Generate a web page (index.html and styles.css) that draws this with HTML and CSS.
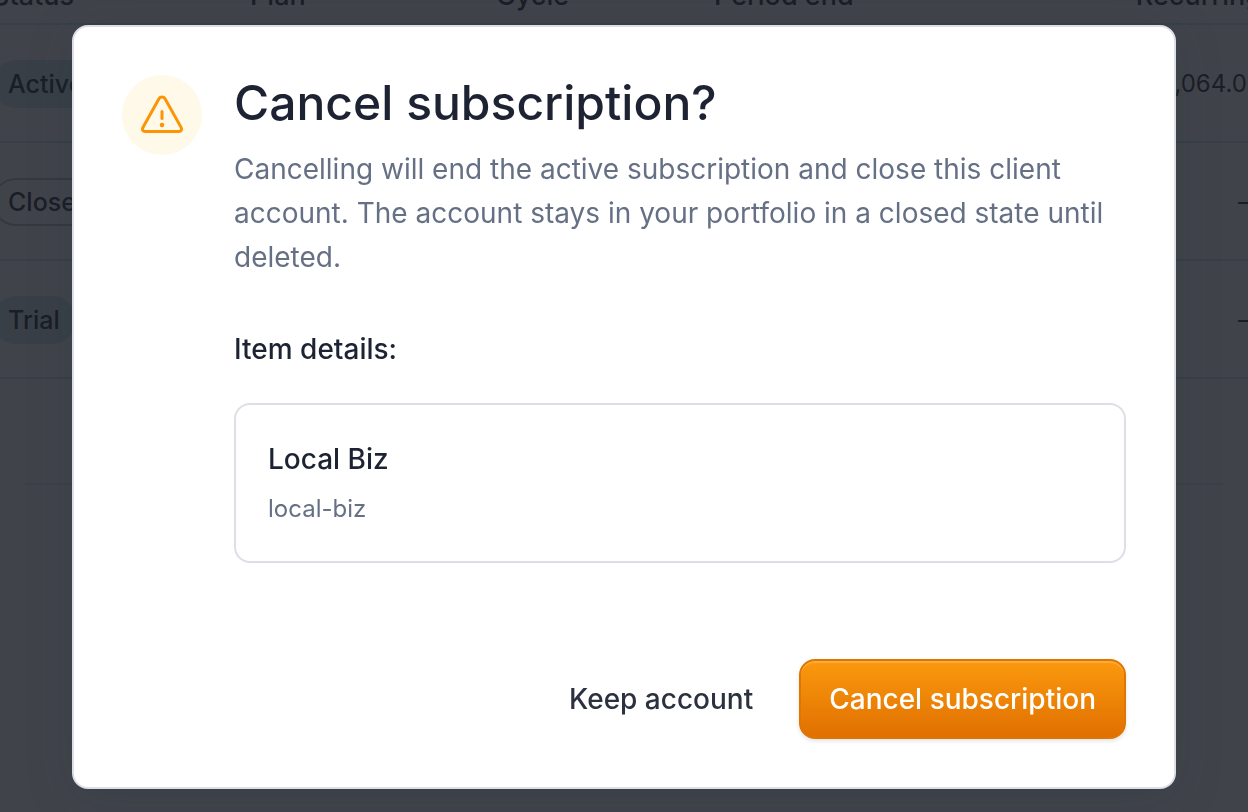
FILE: index.html
```html
<!DOCTYPE html>
<html lang="en">
<head>
    <meta charset="UTF-8">
    <title>Cancel subscription</title>
    <link rel="stylesheet" href="styles.css">
</head>
<body>

<div class="accounts">
    <table class="accounts-table">
        <colgroup>
            <col class="col-status">
            <col class="col-plan">
            <col class="col-cycle">
            <col class="col-period">
            <col>
        </colgroup>
        <thead>
        <tr>
            <th>Status</th>
            <th>Plan</th>
            <th>Cycle</th>
            <th>Period end</th>
            <th class="amount">Recurring</th>
        </tr>
        </thead>
        <tbody>
        <tr>
            <td><span class="badge">Active</span></td>
            <td></td>
            <td></td>
            <td></td>
            <td class="amount">$1,064.00</td>
        </tr>
        <tr>
            <td><span class="badge badge-outline">Closed</span></td>
            <td></td>
            <td></td>
            <td></td>
            <td class="amount">—</td>
        </tr>
        <tr>
            <td><span class="badge">Trial</span></td>
            <td></td>
            <td></td>
            <td></td>
            <td class="amount">—</td>
        </tr>
        </tbody>
    </table>
    <div class="accounts-footer"></div>
</div>

<div class="overlay">
    <div class="modal" role="alertdialog" aria-modal="true" aria-labelledby="modalTitle" aria-describedby="modalText">
        <div class="modal-body">
            <div class="modal-icon">
                <svg width="48" height="48" viewBox="0 0 48 48" fill="none" stroke="currentColor" stroke-width="3" stroke-linecap="round" stroke-linejoin="round" aria-hidden="true">
                    <path d="M21.1 7.6 4.9 36.4C3.7 38.6 4.8 40.5 7.2 40.5H40.8C43.2 40.5 44.3 38.6 43.1 36.4L26.9 7.6C25.6 5.3 22.4 5.3 21.1 7.6Z"/>
                    <path d="M24 20.5V27.5"/>
                    <circle cx="24" cy="34" r="2.3" fill="currentColor" stroke="none"/>
                </svg>
            </div>
            <div class="modal-content">
                <h2 id="modalTitle">Cancel subscription?</h2>
                <p id="modalText" class="modal-text">Cancelling will end the active subscription and close this client account. The account stays in your portfolio in a closed state until deleted.</p>
                <h3>Item details:</h3>
                <div class="item">
                    <div class="item-name">Local Biz</div>
                    <div class="item-slug">local-biz</div>
                </div>
            </div>
        </div>
        <div class="modal-actions">
            <button type="button" class="btn">Keep account</button>
            <button type="button" class="btn btn-warning">Cancel subscription</button>
        </div>
    </div>
</div>

</body>
</html>
```
FILE: styles.css
```css
* {
    box-sizing: border-box;
}

body {
    margin: 0;
    height: 100vh;
    overflow: hidden;
    background-color: #fff;
    color: #1d2333;
    font-family: Inter, "Liberation Sans", sans-serif;
    font-size: 28px;
    line-height: 44px;
}

/* accounts list, scrolled under the dialog */
.accounts {
    margin: -31px -46px 0 -40px;
}

.accounts-table {
    width: 100%;
    table-layout: fixed;
    border-collapse: separate;
    border-spacing: 0;
}

.col-status {
    width: 258px;
}

.col-plan {
    width: 246px;
}

.col-cycle {
    width: 218px;
}

.col-period {
    width: 330px;
}

.accounts-table th, .accounts-table td {
    padding: 0 32px;
    border-bottom: 2px solid #c8e6f0;
    text-align: left;
    white-space: nowrap;
}

.accounts-table th {
    height: 56px;
    font-size: 27px;
    font-weight: 500;
}

.accounts-table td {
    height: 118px;
    padding-top: 2px;
    font-size: 24px;
}

.accounts-table .amount {
    text-align: right;
}

.badge {
    display: inline-block;
    padding: 0 14px;
    border: 2px solid #cbe6ec;
    border-radius: 24px;
    background-color: #cbe6ec;
    font-size: 25px;
    font-weight: 500;
}

.badge-outline {
    border-color: #bbb;
    background-color: transparent;
}

.accounts-footer {
    height: 106px;
    margin: 0 70px 0 64px;
    border-bottom: 2px solid #e6eaf8;
}

.overlay {
    position: fixed;
    inset: 0;
    display: flex;
    align-items: center;
    justify-content: center;
    padding-top: 2px;
    background-color: rgba(26, 29, 37, .83);
}

.modal {
    width: 100%;
    max-width: 1104px;
    padding: 48px;
    border: 2px solid #dcdfe5;
    border-radius: 16px;
    background-color: #fff;
    box-shadow: 0 8px 48px rgba(20, 50, 60, .18);
}

.modal-body {
    display: flex;
    gap: 32px;
}

.modal-icon {
    display: flex;
    flex: none;
    align-items: center;
    justify-content: center;
    width: 80px;
    height: 80px;
    border-radius: 50%;
    background-color: #fff9e9;
    color: #fb9506;
}

.modal-content {
    flex: 1;
}

h2, h3, p {
    margin: 0;
}

h2 {
    font-size: 48px;
    font-weight: 500;
    line-height: 56px;
}

h3 {
    margin-top: 48px;
    font-size: 28px;
    font-weight: 500;
}

.modal-text {
    margin-top: 16px;
    color: #667085;
}

.item {
    margin-top: 32px;
    padding: 32px;
    border: 2px solid #dcdfe5;
    border-radius: 16px;
}

.item-name {
    font-weight: 500;
}

.item-slug {
    margin-top: 8px;
    color: #667085;
    font-size: 24px;
    line-height: 40px;
}

.modal-actions {
    display: flex;
    justify-content: flex-end;
    gap: 16px;
    margin-top: 96px;
}

.btn {
    height: 80px;
    padding: 0 28px;
    border: 2px solid transparent;
    border-radius: 16px;
    background: none;
    color: #2b313f;
    font: inherit;
    font-weight: 500;
    cursor: pointer;
}

.btn-warning {
    border-color: #e07602;
    background: linear-gradient(#fc9a0e, #df6f00) border-box;
    box-shadow: inset 0 2px 0 rgba(255, 255, 255, .2), 0 2px 4px rgba(16, 24, 40, .12);
    color: #fff;
}
```
